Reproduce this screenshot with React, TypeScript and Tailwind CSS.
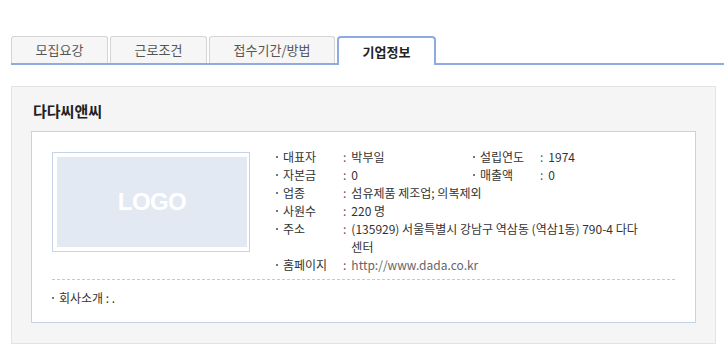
import React from "react";

const font = { fontFamily: '"Noto Sans CJK KR", "Noto Sans", sans-serif' };

const tabs = [
  { label: "모집요강", w: "w-[97px]" },
  { label: "근로조건", w: "w-[97px]" },
  { label: "접수기간/방법", w: "w-[126px]" },
];

function Dot() {
  return <span className="inline-block w-[2px] h-[2px] bg-[#777] mr-[5px] shrink-0" />;
}

function Row({ label, value, labelW = "w-[60px]", valueClass = "text-[#333]" }: { label: string; value: React.ReactNode; labelW?: string; valueClass?: string }) {
  return (
    <div className="flex items-start leading-[18px]">
      <span className="flex items-center h-[18px]">
        <Dot />
      </span>
      <span className={`${labelW} shrink-0 text-[#333]`}>{label}</span>
      <span className="shrink-0 text-[#555] mr-[5px]">:</span>
      <span className={valueClass}>{value}</span>
    </div>
  );
}

export default function App() {
  return (
    <div className="w-[724px] h-[349px] bg-white pt-[36px] text-[12px] overflow-hidden" style={font}>
      {/* tabs */}
      <div className="ml-[11px] flex gap-[2px] border-b-2 border-[#8eaae0] h-[29px]">
        {tabs.map((t) => (
          <div
            key={t.label}
            className={`${t.w} h-[27px] border border-b-0 border-[#d4d4d4] rounded-t-[3px] bg-[#f6f6f6] flex items-center justify-center text-[13px] text-[#555]`}
          >
            {t.label}
          </div>
        ))}
        <div className="w-[99px] h-[29px] -mb-[2px] border-2 border-b-0 border-[#8eaae0] rounded-t-[4px] bg-white flex items-center justify-center text-[13px] font-bold text-[#222]">
          기업정보
        </div>
      </div>

      {/* panel */}
      <div className="ml-[11px] mt-[21px] w-[705px] h-[258px] border border-[#e3e3e3] bg-[#f5f5f5] px-[19px] pt-[14px]">
        <div className="pl-[2px] text-[15px] font-bold text-[#222] leading-[20px] h-[30px]">다다씨앤씨</div>

        <div className="h-[192px] bg-white border border-[#c5d2e7] px-[20px] pt-[16px]">
          <div className="flex">
            <div className="mt-[4px] w-[198px] h-[100px] border border-[#c5d2e7] pl-[4px] pr-[2px] pt-[4px] pb-[4px] shrink-0">
              <div className="w-full h-full bg-[#e3e9f2] flex items-center justify-center text-white font-bold text-[24px] tracking-tight" style={{ fontFamily: '"Liberation Sans", Arial, sans-serif' }}>
                LOGO
              </div>
            </div>
            <div className="ml-[26px] flex flex-col">
              <div className="flex">
                <div className="w-[197px]">
                  <Row label="대표자" value="박부일" />
                </div>
                <Row label="설립연도" value="1974" />
              </div>
              <div className="flex">
                <div className="w-[197px]">
                  <Row label="자본금" value="0" />
                </div>
                <Row label="매출액" value="0" />
              </div>
              <Row label="업종" value="섬유제품 제조업; 의복제외" />
              <Row label="사원수" value="220 명" />
              <Row label="주소" value={<span className="block w-[290px]">(135929) 서울특별시 강남구 역삼동 (역삼1동) 790-4 다다센터</span>} />
              <Row label="홈페이지" value="http://www.dada.co.kr" valueClass="text-[#666]" />
            </div>
          </div>

          <div className="mt-[5px] border-t border-dashed border-[#c8c8c8]" />

          <div className="mt-[9px] flex items-center leading-[18px] text-[#333]">
            <Dot />
            <span>회사소개 : .</span>
          </div>
        </div>
      </div>
    </div>
  );
}
